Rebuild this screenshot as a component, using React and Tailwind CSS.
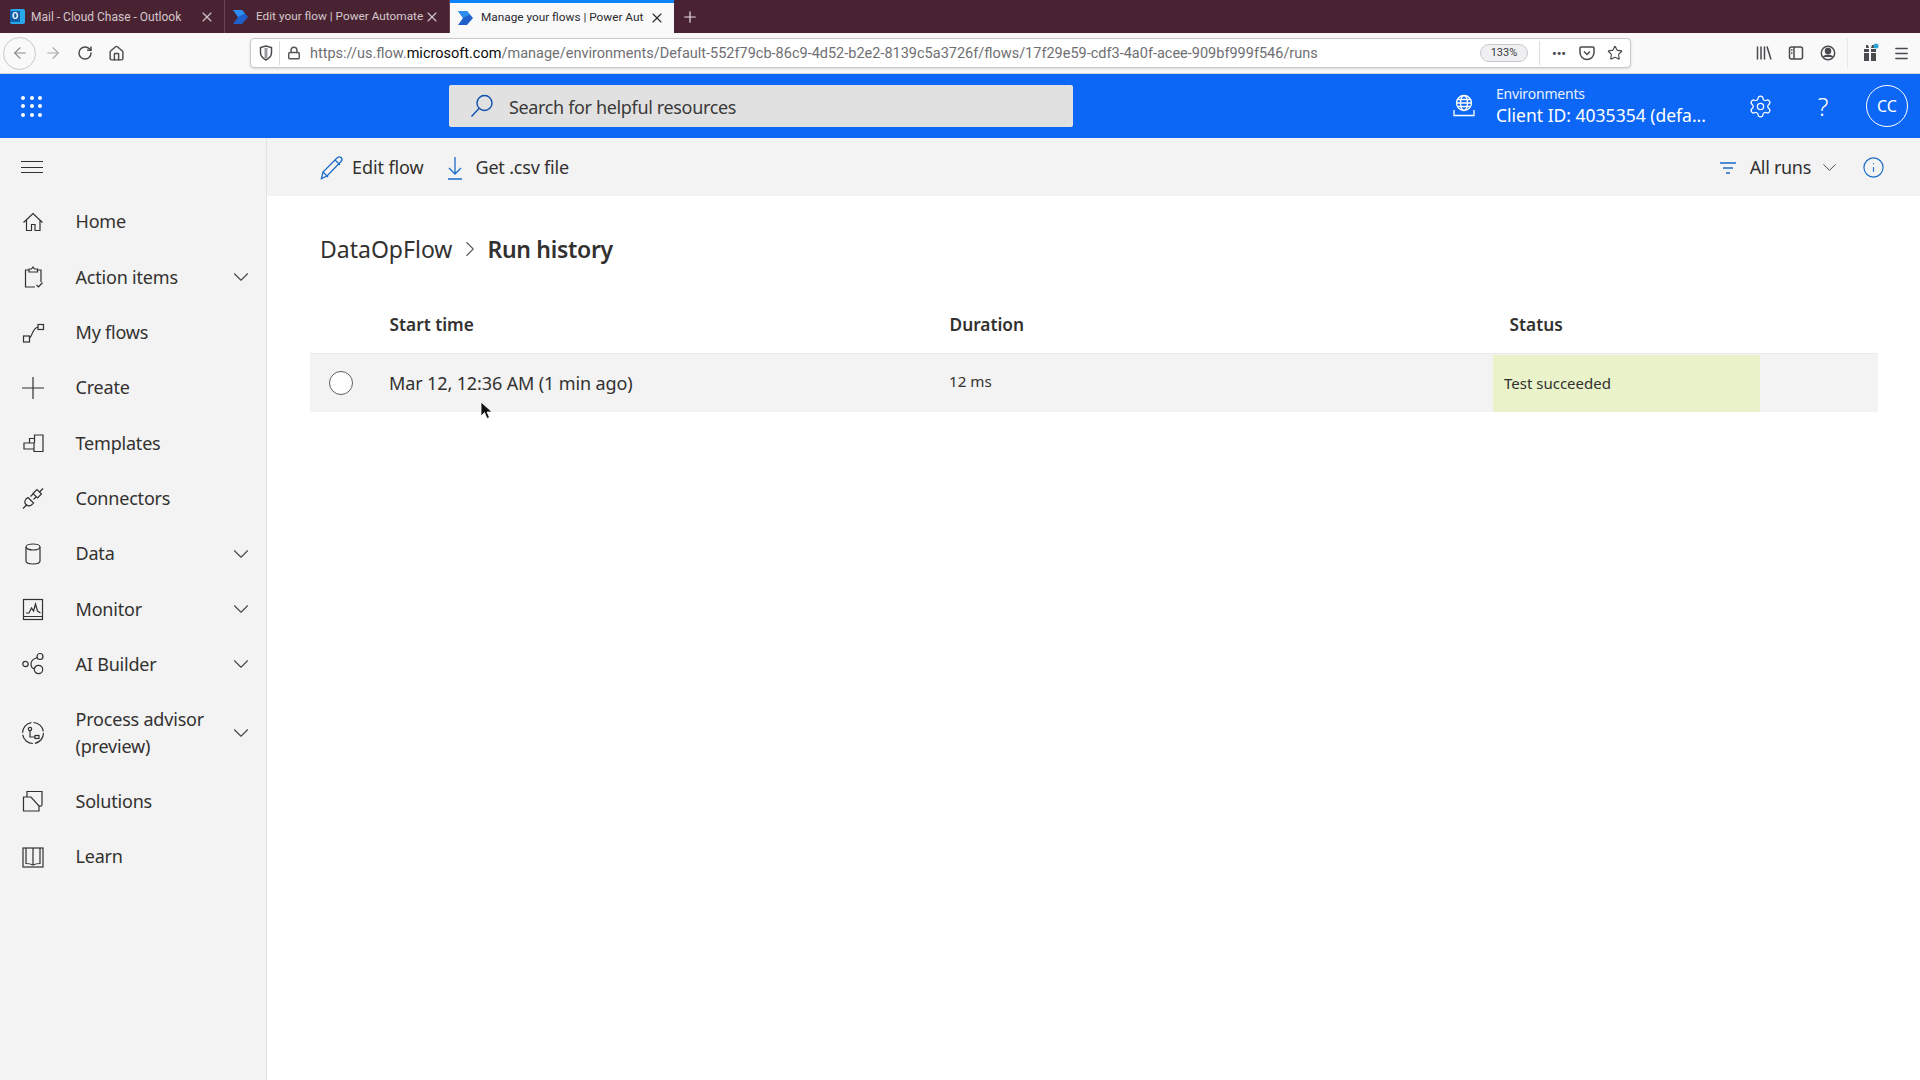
import { Home, Plus, ChevronDown, ChevronRight, RotateCw, ArrowLeft, ArrowRight, Lock, Star, Menu, X, Settings, Info } from "lucide-react";

const Stroke = ({ className, size = 24, children, sw = 1.2 }) => (
  <svg width={size} height={size} viewBox="0 0 24 24" fill="none" stroke="currentColor" strokeWidth={sw} className={className}>
    {children}
  </svg>
);

const navIcons = {
  home: <path d="M2.5 12.5 12 3.5l9.5 9M5.5 10v10.5h5V14.5h3.5v6h5V10" />,
  action: (
    <>
      <path d="M8 5H4.500v17H14M16.500 5H20v12" />
      <path d="M8 7V4h2.500l1.500-2 1.500 2H16.500v3z" />
      <path d="m15.500 20 2 2 4-4.500" />
    </>
  ),
  flows: (
    <>
      <rect x="2.500" y="15" width="6" height="6" />
      <rect x="17" y="3.500" width="5.500" height="5" />
      <path d="M8.500 17c3-1.500 2.500-9.500 8.500-11" />
    </>
  ),
  create: <path d="M12 1v22M1 12h22" />,
  templates: <path d="M3 18v-6h5.500V7.500h5V4H22v16.500h-9V18zM13 18v-6H8.500M13.500 7.500V12" />,
  connectors: (
    <>
      <path d="M2 22.500 6 18.500M18.500 6 22 2.500M12 8l-2.500 2.500M15 11l-2.500 2.500" />
      <path d="m7 11.500 5.500 5.500-2 2c-2 1.500-4 1-5.500-.5s-1.500-3.500 0-5.500z" />
      <path d="m12 7.500 4-4 4.500 4.500-4 4z" />
    </>
  ),
  data: (
    <>
      <ellipse cx="12" cy="5" rx="7" ry="3" />
      <path d="M5 5v14c0 1.700 3 3 7 3s7-1.300 7-3V5" />
    </>
  ),
  monitor: (
    <>
      <rect x="2.500" y="2.500" width="19" height="20" />
      <path d="M2.500 19.500h19M5 16h3l2.500-5 2 3 2-7 2 7 3 2" />
    </>
  ),
  ai: (
    <>
      <circle cx="4.500" cy="12" r="2.700" />
      <circle cx="19" cy="4.500" r="3" />
      <circle cx="17.500" cy="17.500" r="4.200" />
      <path d="M10 12c0-3 3-5.500 6.500-6.500M10 12c0 2.500 1.500 4.500 3.500 5" />
    </>
  ),
  process: (
    <>
      <circle cx="12" cy="12" r="10.500" strokeDasharray="14.500 2" />
      <circle cx="9" cy="8" r="1.700" />
      <path d="M9 10v6h5" />
      <rect x="14" y="14.500" width="4" height="3" />
    </>
  ),
  solutions: (
    <>
      <path d="M6 8V2.500h15v14" />
      <path d="M2.500 8H10l8 9v5H2.500z" />
      <path d="M18 17h3" />
    </>
  ),
  learn: (
    <>
      <rect x="2" y="3" width="20" height="19" />
      <path d="M5 3v15.500c3 0 5 .5 7 1.500 2-1 4-1.500 7-1.500V3M12 3v17" />
    </>
  ),
};

const navItems = [
  { key: "home", label: "Home" },
  { key: "action", label: "Action items", more: true },
  { key: "flows", label: "My flows" },
  { key: "create", label: "Create" },
  { key: "templates", label: "Templates" },
  { key: "connectors", label: "Connectors" },
  { key: "data", label: "Data", more: true },
  { key: "monitor", label: "Monitor", more: true },
  { key: "ai", label: "AI Builder", more: true },
  { key: "process", label: "Process advisor (preview)", more: true, tall: true },
  { key: "solutions", label: "Solutions" },
  { key: "learn", label: "Learn" },
];

function FlowLogo() {
  return (
    <svg width="17" height="14" viewBox="0 0 17 14" className="shrink-0">
      <path d="M0 0h9l6 7-6 7H0l5-7z" fill="#1e5fc9" />
      <path d="M5 7 0 0h9l3 3.500z" fill="#2f8df0" />
    </svg>
  );
}

function OutlookLogo() {
  return (
    <div className="relative ml-[2px] w-[15px] h-[15px] shrink-0 rounded-[2px] bg-[#28a8ea]">
      <div className="absolute left-0 top-[2px] w-[10px] h-[11px] bg-[#0f5ea8] text-white text-[9px] leading-[11px] text-center font-bold">O</div>
    </div>
  );
}

function Tab({ logo, title, active, w, text = "text-[12px]" }) {
  return (
    <div className={`${w} h-full flex items-center pl-[8px] pr-[9px] gap-[6px] ${active ? "bg-[#f9f9fa] border-t-[3px] border-[#0a84ff] text-[#2a2a2e]" : "border-r border-[#6a4452] text-[#d4c8cc]"}`}>
      {logo}
      <span className={`flex-1 min-w-0 whitespace-nowrap ${text}`}>{title}</span>
      <X size={16} strokeWidth={1.6} className="shrink-0" />
    </div>
  );
}

function BrowserChrome() {
  return (
    <div className="font-['Roboto',sans-serif]">
      <div className="h-[33px] bg-[#4a2332] flex items-center">
        <Tab w="w-[225px]" logo={<OutlookLogo />} title="Mail - Cloud Chase - Outlook" />
        <Tab w="w-[225px]" text="text-[11.8px]" logo={<FlowLogo />} title="Edit your flow | Power Automate" />
        <Tab w="w-[224px]" text="text-[11.8px]" active logo={<FlowLogo />} title="Manage your flows | Power Aut" />
        <Plus size={18} strokeWidth={1.6} className="ml-[7px] text-[#eadfe3]" />
      </div>
      <div className="h-[41px] bg-[#f9f9fa] border-b border-[#d7d7db] flex items-center text-[#4a4a4f]">
        <div className="ml-[3px] w-[33px] h-[33px] rounded-full border border-[#c8c8cc] flex items-center justify-center">
          <ArrowLeft size={18} strokeWidth={1.5} className="text-[#8a8a8e]" />
        </div>
        <ArrowRight size={18} strokeWidth={1.5} className="ml-[8px] text-[#a8a8ac]" />
        <RotateCw size={16} strokeWidth={2.2} className="ml-[15px]" />
        <Home size={17} strokeWidth={2} className="ml-[15px]" />
        <div className="ml-[125px] w-[1381px] h-[30px] bg-white border border-[#c8c8cc] rounded-[4px] shadow-sm flex items-center">
          <svg width="14" height="16" viewBox="0 0 14 16" className="ml-[8px] shrink-0" fill="none" stroke="#4a4a4f" strokeWidth="1.500">
            <path d="M7 1 1.500 2.500v5c0 3.500 2.500 6 5.500 7.500 3-1.500 5.500-4 5.500-7.500v-5z" />
            <path d="M7 3v10.500" strokeWidth="3" stroke="#9a9a9e" />
          </svg>
          <div className="ml-[6px] w-px h-[24px] bg-[#dcdcde]" />
          <Lock size={14} strokeWidth={2.5} className="ml-[7px] text-[#55555a]" />
          <div className="ml-[9px] pt-[1px] flex-1 text-[14.5px] whitespace-nowrap text-[#6f6f73]">
            https://us.flow.<span className="text-[#0c0c0d]">microsoft.com</span>/manage/environments/Default-552f79cb-86c9-4d52-b2e2-8139c5a3726f/flows/17f29e59-cdf3-4a0f-acee-909bf999f546/runs
          </div>
          <div className="w-[48px] h-[18px] rounded-full border border-[#c8c8cc] bg-[#f0f0f2] text-[11px] text-center leading-[16px] text-[#38383d]">133%</div>
          <div className="ml-[11px] w-px h-[24px] bg-[#dcdcde]" />
          <span className="ml-[9px] w-[20px] font-bold text-[13px] leading-none text-center">•••</span>
          <svg width="16" height="16" viewBox="0 0 16 16" className="ml-[10px]" fill="none" stroke="#4a4a4f" strokeWidth="1.500">
            <path d="M2 2h12a1 1 0 0 1 1 1v4.500a7 7 0 0 1-14 0V3a1 1 0 0 1 1-1z" />
            <path d="m5 6.500 3 3 3-3" />
          </svg>
          <Star size={16} strokeWidth={1.7} className="ml-[12px] mr-[7px]" />
        </div>
        <svg width="16" height="16" viewBox="0 0 16 16" className="ml-[125px]" fill="none" stroke="#4a4a4f" strokeWidth="1.500">
          <path d="M1.500 1.500v13M5 1.500v13M8.500 1.500v13M11 1.500l4 13" />
        </svg>
        <svg width="16" height="16" viewBox="0 0 16 16" className="ml-[16px]" fill="none" stroke="#4a4a4f" strokeWidth="1.500">
          <rect x="1.500" y="2" width="13" height="12" rx="2" />
          <path d="M6 2v12M3 5h1.500M3 8h1.500" />
        </svg>
        <svg width="16" height="16" viewBox="0 0 16 16" className="ml-[16px]" fill="none" stroke="#4a4a4f" strokeWidth="1.500">
          <circle cx="8" cy="8" r="6.700" />
          <circle cx="8" cy="6" r="2.500" fill="#4a4a4f" />
          <path d="M3.500 12c2-2.500 7-2.500 9 0" fill="#4a4a4f" />
        </svg>
        <div className="ml-[11px] w-px h-[30px] bg-[#e8e8ea]" />
        <svg width="18" height="20" viewBox="0 0 18 20" className="ml-[13px]">
          <path d="M3 6h5v3H3zM3 10h5v8H3zM10 6h5v3h-5zM10 10h5v8h-5zM5 2h2l1 3H5zM13 2h-2l-1 3h3z" fill="#4a4a4f" />
          <circle cx="15" cy="3" r="2.500" fill="#2aa7d9" />
        </svg>
        <Menu size={17} strokeWidth={2} className="ml-[14px]" />
      </div>
    </div>
  );
}

function AppHeader() {
  return (
    <header className="h-[64px] bg-[#0c66f6] flex items-center text-white shrink-0">
      <div className="ml-[21px] grid grid-cols-3 gap-[4.5px] w-[21px]">
        {Array.from({ length: 9 }).map((_, i) => (
          <span key={i} className="w-[4px] h-[4px] rounded-full bg-white" />
        ))}
      </div>
      <div className="ml-[407px] w-[624px] h-[42px] rounded-[2px] bg-[#e1e1e1] flex items-center">
        <svg width="24" height="24" viewBox="0 0 24 24" className="ml-[21px]" fill="none" stroke="#0d4fae" strokeWidth="1.400">
          <circle cx="14.500" cy="9" r="7.500" />
          <path d="M9 14.500 1.500 22.500" />
        </svg>
        <span className="ml-[15px] pt-[2px] text-[18px] tracking-[-0.35px] text-[#3b3a39]">Search for helpful resources</span>
      </div>
      <svg width="24" height="24" viewBox="0 0 24 24" className="ml-[379px]" fill="none" stroke="white" strokeWidth="1.300">
        <circle cx="12" cy="9" r="7.500" />
        <ellipse cx="12" cy="9" rx="3.500" ry="7.500" />
        <path d="M4.500 9h15M5.500 5.500h13M5.500 12.500h13M2 16v5.500h20V16" />
      </svg>
      <div className="ml-[20px] w-[245px] pt-[1px] leading-none">
        <div className="text-[14px] tracking-[-0.2px] leading-[18px] text-[#e8f0ff]">Environments</div>
        <div className="text-[17.5px] leading-[25px] whitespace-nowrap">Client ID: 4035354 (defa...</div>
      </div>
      <Settings size={25} strokeWidth={1.2} className="ml-[7px]" />
      <span className="ml-[37px] w-[26px] text-center text-[25px] font-light leading-none">?</span>
      <div className="ml-[30px] w-[42px] h-[42px] rounded-full border border-white flex items-center justify-center text-[16px]">CC</div>
    </header>
  );
}

function Sidebar() {
  return (
    <aside className="w-[267px] shrink-0 bg-[#f3f3f3] border-r border-[#e3e3e3] text-[#323130]">
      <div className="h-[56.3px] flex items-center pl-[21px] pt-[2px]">
        <div className="w-[22px] h-[12px] flex flex-col justify-between">
          <span className="h-px bg-[#323130]" />
          <span className="h-px bg-[#323130]" />
          <span className="h-px bg-[#323130]" />
        </div>
      </div>
      {navItems.map((item) => (
        <div key={item.key} className={`${item.tall ? "h-[81.7px]" : "h-[55.3px]"} flex items-center`}>
          <div className="w-[75.5px] shrink-0 pl-[21px]">
            <Stroke size={24}>{navIcons[item.key]}</Stroke>
          </div>
          <span className="w-[152.5px] text-[18px] tracking-[-0.2px] leading-[27px]">{item.label}</span>
          {item.more && <ChevronDown size={26} strokeWidth={1} className="text-[#484644]" />}
        </div>
      ))}
    </aside>
  );
}

function RunHistory() {
  return (
    <main className="flex-1 bg-white text-[#323130]">
      <div className="h-[58px] pt-[1px] bg-[#f3f3f3] flex items-center">
        <svg width="24" height="24" viewBox="0 0 24 24" className="ml-[53px] text-[#1a6cc8]" fill="none" stroke="currentColor" strokeWidth="1.300">
          <path d="M1.500 22.500 3 16 17 2c1.500-1.500 3-1.500 4-.5s1.500 2.500 0 4L7 20z" />
          <path d="M3 16l5 5M15 4l5 5" />
        </svg>
        <span className="ml-[8px] text-[18px] tracking-[-0.1px]">Edit flow</span>
        <svg width="16" height="24" viewBox="0 0 16 24" className="ml-[23px] text-[#1a6cc8]" fill="none" stroke="currentColor" strokeWidth="1.300">
          <path d="M8 1v17M2 12l6 6 6-6M1 23h14" />
        </svg>
        <span className="ml-[13px] text-[18px] tracking-[-0.2px]">Get .csv file</span>
        <div className="ml-auto flex items-center">
          <svg width="18" height="14" viewBox="0 0 18 14" fill="none" stroke="#1a6cc8" strokeWidth="1.300">
            <path d="M1 2h16M4 7h10M7 12h4" />
          </svg>
          <span className="ml-[13px] text-[18px] tracking-[-0.3px]">All runs</span>
          <ChevronDown size={23} strokeWidth={1} className="ml-[7px] text-[#484644]" />
          <Info size={23} strokeWidth={1.2} className="ml-[21px] mr-[35px] text-[#1a6cc8]" />
        </div>
      </div>
      <div className="pl-[53px] pt-[35px] h-[73px] flex items-start text-[23px] leading-[36px]">
        <span>DataOpFlow</span>
        <ChevronRight size={26} strokeWidth={1} className="ml-[5px] mt-[5px] text-[#605e5c]" />
        <span className="ml-[4px] font-semibold tracking-[-0.3px]">Run history</span>
      </div>
      <div className="ml-[43px] mr-[42px] relative">
        <div className="h-[84px] flex items-center pt-[27px] text-[17.3px] font-semibold">
          <span className="ml-[79.5px] w-[560px]">Start time</span>
          <span className="w-[560px]">Duration</span>
          <span>Status</span>
        </div>
        <div className="h-[59px] bg-[#f3f3f3] border-t border-[#eaeaea] flex items-center">
          <span className="ml-[19px] w-[24px] h-[24px] rounded-full border-[1.5px] border-[#605e5c] bg-white" />
          <span className="ml-[36px] w-[560px] text-[18px] tracking-[-0.12px]">Mar 12, 12:36 AM (1 min ago)</span>
          <span className="w-[544px] text-[15.2px] pb-[4px]">12 ms</span>
          <div className="w-[267px] h-[57px] bg-[#e9f2c9] flex items-center pl-[11px] text-[15px]">Test succeeded</div>
        </div>
        <svg width="14" height="20" viewBox="0 0 14 20" className="absolute left-[170px] top-[132px]">
          <path d="M1 1v14l3.500-3.500 2.500 6 2.500-1-2.500-5.500H12z" fill="#111" stroke="white" strokeWidth="0.800" />
        </svg>
      </div>
    </main>
  );
}

export default function App() {
  return (
    <div className="w-[1920px] h-[1080px] overflow-hidden flex flex-col font-['Noto_Sans',sans-serif]">
      <BrowserChrome />
      <AppHeader />
      <div className="flex flex-1 min-h-0">
        <Sidebar />
        <RunHistory />
      </div>
    </div>
  );
}
